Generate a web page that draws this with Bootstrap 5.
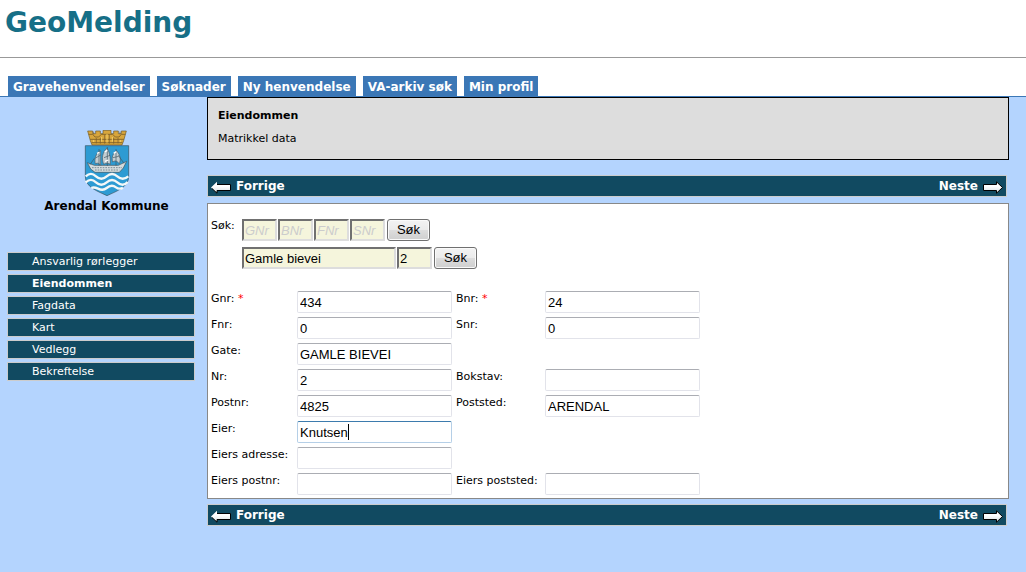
<!DOCTYPE html>
<html lang="no">
<head>
<meta charset="utf-8">
<meta name="viewport" content="width=device-width, initial-scale=1">
<title>GeoMelding</title>
<link href="https://cdn.jsdelivr.net/npm/bootstrap@5.3.0/dist/css/bootstrap.min.css" rel="stylesheet">
<style>
body { font: 11px/14px Verdana, "DejaVu Sans", sans-serif; color: #000; background: #fff; }
a { color: #fff; text-decoration: none; }
.brand { height: 58px; padding: 4px 5px; border-bottom: 1px solid #999; }
.brand h1 { font-size: 28px; line-height: 38px; font-weight: 700; color: #166f87; margin: 0; }
.tabs { gap: 7px; padding: 18px 8px 0; border-bottom: 1px solid #3b77b6; }
.tabs .nav-link { background: #3b77b6; color: #fff; font-size: 12px; font-weight: 700; padding: 4px 5px 2px; line-height: 14px; }
.workspace { background: #b4d4fe; }
.sidebar { width: 207px; flex: none; padding: 33px 12px 0 7px; }
.emblem { padding-left: 11px; }
.kommune { font-size: 12px; line-height: 16px; font-weight: 700; }
.steps { gap: 3px; margin-top: 38px; }
.steps a { display: block; border: 1px solid #ccc; background: #114a61; line-height: 17px; padding-left: 24px; }
.main-col { margin-right: 17px; min-width: 0; }
.intro { border: 1px solid #000; background: #ddd; padding: 11px 10px; height: 63px; margin-bottom: 15px; }
.intro h2 { font-size: 11px; line-height: 14px; font-weight: 700; margin: 0 0 9px; }
.pager { border: 1px solid #ccc; background: #114a61; height: 22px; margin: 0 2px 0 0; padding: 0 3px; font-size: 12px; font-weight: 700; }
.pager a { line-height: 20px; display: flex; gap: 5px; }
.pager svg { margin-top: 5px; }
.panel { border: 1px solid #888; background: #fff; padding: 15px 3px 3px; margin: 6px 0 5px; }
input, .btn-old { font: 13px/16px "Liberation Sans", Arial, sans-serif; height: 22px; color: #000; }
.search-grid { display: grid; grid-template-columns: 31px 1fr; row-gap: 6px; margin-bottom: 22px; }
.search-grid input { background: #f5f5dc; border: 2px solid #ddd; border-top-color: #707070; border-left-color: #707070; padding: 0 1px; width: 35px; border-radius: 0; }
.search-grid input.street { width: 154px; }
.search-grid input::placeholder { color: #ccc; font-style: italic; opacity: 1; }
.search-row { gap: 1px; }
.btn-old { width: 43px; border: 1px solid #707070; border-radius: 3px; background: linear-gradient(#f3f3f3, #ebebeb 50%, #ddd 50%, #cfcfcf); box-shadow: inset 0 0 0 1px #fafafa; padding: 0; margin-left: 1px; }
.fields { display: grid; grid-template-columns: 82px 155px 85px 155px; gap: 4px; }
.fields label { white-space: nowrap; padding-top: 1px; }
.fields label.first { grid-column: 1; }
.fields input { width: 100%; border: 1px solid #e2e3ea; border-top-color: #abadb3; border-radius: 2px; padding: 0 2px; }
.fields input.active-field { border-color: #b5cfe7; border-top-color: #3d7bad; background: linear-gradient(#000, #000) 50px center / 1px 16px no-repeat #fff; }
.fields input.active-field:focus { outline: 0; background: #fff; }
.req { color: #f00; }
</style>
</head>
<body class="d-flex flex-column min-vh-100">
<header>
  <div class="brand"><h1>GeoMelding</h1></div>
  <nav class="nav tabs">
    <a class="nav-link" href="#">Gravehenvendelser</a>
    <a class="nav-link" href="#">Søknader</a>
    <a class="nav-link" href="#">Ny henvendelse</a>
    <a class="nav-link" href="#">VA-arkiv søk</a>
    <a class="nav-link" href="#">Min profil</a>
  </nav>
</header>
<svg width="0" height="0" class="position-absolute" aria-hidden="true">
  <defs>
    <linearGradient id="shade" x1="0" y1="0" x2="0" y2="1"><stop offset=".4" stop-color="#fff"/><stop offset="1" stop-color="#d4dde0"/></linearGradient>
    <symbol id="arrow" viewBox="0 0 20 13"><path d="M.5 3.500h13V.8l6 5.700-6 5.700V9.500H.5z" fill="url(#shade)" stroke="#000" stroke-width="1"/></symbol>
    <symbol id="arrow-left" viewBox="0 0 20 13"><path d="M19.500 3.500H6V.8L0 6.500l6 5.700V9.500h13.500z" fill="url(#shade)"/><path d="M6 3.500h13.500v6H6v2.700L1 7.500" fill="none" stroke="#000" stroke-width="1"/></symbol>
  </defs>
</svg>
<div class="workspace d-flex flex-grow-1">
  <aside class="sidebar">
    <div class="emblem d-flex flex-column align-items-center text-nowrap">
    <svg width="46" height="68" viewBox="0 0 138 204" role="img" aria-label="Arendal byvåpen">
      <path d="M11 3h15v8h9V3h14v8h8V1h24v10h8V3h14v8h9V3h15l-8 29-5 13H24l-5-13z" fill="#d8a63c" stroke="#6e5727" stroke-width="2"/>
      <path d="M14 13h12l7 8h11l8-8h34l8 8h11l7-8h12M18 28h102M23 38h92" fill="none" stroke="#8b6a2b" stroke-width="3"/>
      <path d="M37 24v16M49 23v18M62 14v27M76 14v27M89 23v18M102 24v16M29 5v8M108 5v8" stroke="#76592a" stroke-width="2"/>
      <path d="M53 21v14M69 12v26M85 21v14M29 30v6M109 30v6" stroke="#f5cf69" stroke-width="3"/>
      <path d="M4 47h130v92c0 32-33 43-65 58C37 182 4 171 4 139z" fill="#2d9bd3" stroke="#33515f" stroke-width="2"/>
      <path d="M10 98l21 8h72l25-12-10 20-12 13H33L20 117z" fill="#d3dbdd" stroke="#3d525c" stroke-width="2"/>
      <path d="M24 113h90M33 120h73" stroke="#506773" stroke-width="2" stroke-dasharray="5 3"/>
      <path d="M44 65c-10 10-13 25-10 36 9-4 13 1 16 5V62zM68 55c-13 13-16 30-9 48 7-5 14-4 20 0 1-17-1-32-9-48zM98 62c-11 7-16 20-12 34 8-6 14-2 20 5 5-12 2-24-3-32z" fill="#c3ced2" stroke="#465b66" stroke-width="2"/>
      <path d="M45 57v50M70 51v57M96 57v50M35 84l15-9M60 83l18-7M87 83l17-4M18 104l13-19M120 100l-17-24" stroke="#415661" stroke-width="2"/>
      <path d="M39 70l7-3M62 66l8-5M89 70l8-5M63 94l10-4" stroke="#fff" stroke-width="4"/>
      <path d="M5 139c12-10 20-10 31 0s21 10 32 0 21-10 32 0 21 10 33 0M5 157c12-10 20-10 31 0s21 10 32 0 21-10 32 0 21 10 31-1M22 174c8-4 12-2 20 2s18 5 26-2 19-9 28-2 14 5 21 1" fill="none" stroke="#f4f8f8" stroke-width="7"/>
    </svg>
    <span class="kommune">Arendal Kommune</span>
    </div>
    <nav class="steps d-flex flex-column">
      <a href="#">Ansvarlig rørlegger</a>
      <a href="#" class="fw-bold" aria-current="step">Eiendommen</a>
      <a href="#">Fagdata</a>
      <a href="#">Kart</a>
      <a href="#">Vedlegg</a>
      <a href="#">Bekreftelse</a>
    </nav>
  </aside>
  <main class="main-col flex-grow-1">
    <section class="intro"><h2>Eiendommen</h2><p class="m-0">Matrikkel data</p></section>
    <nav class="pager d-flex justify-content-between">
      <a href="#"><svg width="20" height="13"><use href="#arrow-left"/></svg>Forrige</a>
      <a href="#">Neste<svg width="20" height="13"><use href="#arrow"/></svg></a>
    </nav>
    <form class="panel">
      <div class="search-grid">
        <label for="gnrs">Søk:</label>
        <div class="search-row d-flex">
          <input id="gnrs" placeholder="GNr"><input placeholder="BNr" aria-label="BNr"><input placeholder="FNr" aria-label="FNr"><input placeholder="SNr" aria-label="SNr">
          <button type="button" class="btn-old">Søk</button>
        </div>
        <span></span>
        <div class="search-row d-flex">
          <input class="street" value="Gamle bievei" aria-label="Gate"><input value="2" aria-label="Husnummer">
          <button type="button" class="btn-old">Søk</button>
        </div>
      </div>
      <div class="fields">
        <label class="first" for="gnr">Gnr: <span class="req">*</span></label><input id="gnr" value="434">
        <label for="bnr">Bnr: <span class="req">*</span></label><input id="bnr" value="24">
        <label class="first" for="fnr">Fnr:</label><input id="fnr" value="0">
        <label for="snr">Snr:</label><input id="snr" value="0">
        <label class="first" for="gate">Gate:</label><input id="gate" value="GAMLE BIEVEI">
        <label class="first" for="nr">Nr:</label><input id="nr" value="2">
        <label for="bokstav">Bokstav:</label><input id="bokstav">
        <label class="first" for="postnr">Postnr:</label><input id="postnr" value="4825">
        <label for="poststed">Poststed:</label><input id="poststed" value="ARENDAL">
        <label class="first" for="eier">Eier:</label><input id="eier" class="active-field" value="Knutsen">
        <label class="first" for="eadr">Eiers adresse:</label><input id="eadr">
        <label class="first" for="epnr">Eiers postnr:</label><input id="epnr">
        <label for="epsted">Eiers poststed:</label><input id="epsted">
      </div>
    </form>
    <nav class="pager d-flex justify-content-between">
      <a href="#"><svg width="20" height="13"><use href="#arrow-left"/></svg>Forrige</a>
      <a href="#">Neste<svg width="20" height="13"><use href="#arrow"/></svg></a>
    </nav>
  </main>
</div>
<script src="https://cdn.jsdelivr.net/npm/bootstrap@5.3.0/dist/js/bootstrap.bundle.min.js"></script>
</body>
</html>
